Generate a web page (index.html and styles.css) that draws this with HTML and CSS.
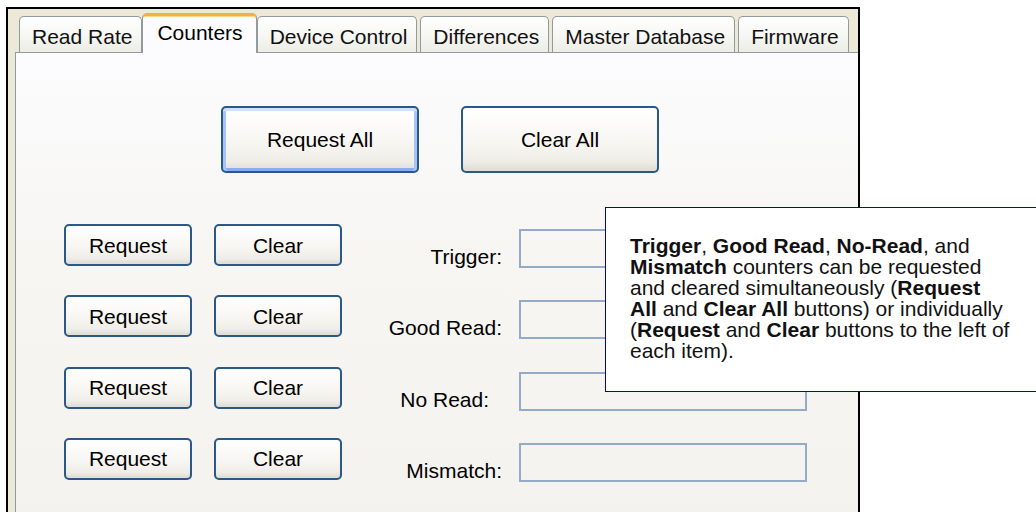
FILE: index.html
```html
<!DOCTYPE html>
<html lang="en">
<head>
<meta charset="utf-8">
<title>Counters</title>
<link rel="stylesheet" href="styles.css">
</head>
<body>
<div class="frame">
  <div class="tabstrip">
    <div class="tab">Read Rate</div>
    <div class="tab tab-active">Counters</div>
    <div class="tab">Device Control</div>
    <div class="tab">Differences</div>
    <div class="tab">Master Database</div>
    <div class="tab">Firmware</div>
  </div>
  <div class="panel">
    <div class="all-row">
      <button class="btn btn-big btn-default">Request All</button>
      <button class="btn btn-big">Clear All</button>
    </div>
    <div class="counters">
      <div class="counter-row">
        <div class="btn-group"><button class="btn btn-small">Request</button><button class="btn btn-small">Clear</button></div>
        <div class="label">Trigger:</div>
        <div class="field"></div>
      </div>
      <div class="counter-row">
        <div class="btn-group"><button class="btn btn-small">Request</button><button class="btn btn-small">Clear</button></div>
        <div class="label">Good Read:</div>
        <div class="field"></div>
      </div>
      <div class="counter-row">
        <div class="btn-group"><button class="btn btn-small">Request</button><button class="btn btn-small">Clear</button></div>
        <div class="label label-short">No Read:</div>
        <div class="field"></div>
      </div>
      <div class="counter-row">
        <div class="btn-group"><button class="btn btn-small">Request</button><button class="btn btn-small">Clear</button></div>
        <div class="label">Mismatch:</div>
        <div class="field"></div>
      </div>
    </div>
  </div>
</div>
<div class="callout">
  <p><b>Trigger</b>, <b>Good Read</b>, <b>No-Read</b>, and<br><b>Mismatch</b> counters can be requested<br>and cleared simultaneously (<b>Request</b><br><b>All</b> and <b>Clear All</b> buttons) or individually<br>(<b>Request</b> and <b>Clear</b> buttons to the left of<br>each item).</p>
</div>
</body>
</html>
```
FILE: styles.css
```css
html, body {
  margin: 0;
  padding: 0;
  background: #ffffff;
  overflow: hidden;
  height: 512px;
}

body {
  font-family: "Liberation Sans", Arial, sans-serif;
  font-size: 21px;
  color: #000;
  position: relative;
}

.frame {
  margin: 7px 0 0 6px;
  width: 843px;
  height: 520px;
  border: 2px solid #000;
  background: #ECE9D8;
  padding-left: 7px;
  box-sizing: content-box;
  display: flex;
  flex-direction: column;
}

.tabstrip {
  height: 43px;
  display: flex;
  align-items: flex-end;
  gap: 3px;
  padding-left: 4px;
  position: relative;
  z-index: 2;
}

.tab {
  box-sizing: border-box;
  height: 36px;
  padding: 9px 9px 0 12px;
  line-height: 21px;
  border: 1px solid #919B9C;
  border-bottom: none;
  border-radius: 5px 5px 0 0;
  background: linear-gradient(180deg, #FFFFFF 0%, #F7F7F4 50%, #EDEDE6 100%);
  white-space: nowrap;
  color: #111;
}

.tab-active {
  height: 40px;
  margin: 0 -3px -1px;
  padding: 6px 13px 0 14px;
  border-top: 3px solid #F2B33D;
  background: #FCFCFE;
  box-shadow: inset 0 1px 0 #FFD98A;
  color: #000;
}

.panel {
  flex: 1;
  border: 1px solid #919B9C;
  border-right: none;
  background: linear-gradient(180deg, #FCFCFE 0%, #F7F6F3 40%, #F3F2EE 100%);
}

.all-row {
  display: flex;
  gap: 42px;
  margin: 53px 0 0 205px;
}

.btn {
  font: inherit;
  color: #000;
  box-sizing: border-box;
  border: 2px solid #2A5889;
  border-radius: 5px;
  background: linear-gradient(180deg, #FFFFFF 0%, #F7F6F2 55%, #EEEDE7 85%, #DEDCD3 100%);
  box-shadow: inset 0 -2px 1px #E2DFD6;
  padding: 0;
  text-align: center;
  line-height: 21px;
}

.btn-big {
  width: 198px;
  height: 67px;
}

.btn-default {
  box-shadow: inset 0 3px 0 #CFE1FC, inset 3px 0 0 #A8C4F4, inset -3px 0 0 #A8C4F4, inset 0 -3px 0 #8AAEEC;
}

.counters {
  margin: 51px 0 0 48px;
  display: flex;
  flex-direction: column;
  gap: 29.3px;
}

.counter-row {
  display: grid;
  grid-template-columns: 278px 177px 288px;
  height: 42px;
}

.btn-group {
  display: flex;
  gap: 22px;
}

.btn-small {
  width: 128px;
  height: 42px;
}

.label {
  text-align: right;
  padding: 22px 17px 0 0;
  line-height: 21px;
  white-space: nowrap;
}

.label-short {
  padding-right: 30px;
}

.field {
  box-sizing: border-box;
  margin-top: 5px;
  height: 39px;
  border: 2px solid #93ABC7;
}

.callout {
  position: absolute;
  left: 605px;
  top: 207px;
  width: 460px;
  height: 185px;
  box-sizing: border-box;
  border: 1px solid #0000CC;
  background: #FFFFFF;
  padding: 27px 0 0 24px;
  z-index: 5;
}

.callout p {
  margin: 0;
  font-size: 21px;
  line-height: 21px;
  color: #111;
  white-space: nowrap;
}
```
